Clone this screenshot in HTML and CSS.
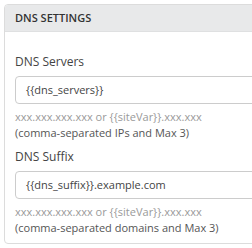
FILE: index.html
```html
<!DOCTYPE html>
<html>
<head>
<meta charset="utf-8">
<link rel="stylesheet" href="styles.css">
</head>
<body>
<div class="card">
  <div class="card-header">DNS SETTINGS</div>
  <div class="card-body">
    <div class="field">
      <label class="label">DNS Servers</label>
      <div class="input">{{dns_servers}}</div>
      <div class="hint">xxx.xxx.xxx.xxx or {{siteVar}}.xxx.xxx</div>
      <div class="note">(comma-separated IPs and Max 3)</div>
    </div>
    <div class="field">
      <label class="label">DNS Suffix</label>
      <div class="input">{{dns_suffix}}.example.com</div>
      <div class="hint">xxx.xxx.xxx.xxx or {{siteVar}}.xxx.xxx</div>
      <div class="note">(comma-separated domains and Max 3)</div>
    </div>
  </div>
</div>
</body>
</html>
```
FILE: styles.css
```css
html, body {
  margin: 0;
  padding: 0;
  background: #ffffff;
  overflow: hidden;
}
body {
  padding: 4px 0 0 4px;
  font-family: "Open Sans", "DejaVu Sans", sans-serif;
  color: #333333;
}
.card {
  width: 320px;
  border: 1px solid #dcdcdc;
  border-radius: 4px;
  overflow: hidden;
}
.card-header {
  height: 26px;
  line-height: 26px;
  background: #e8e9ea;
  border-bottom: 1px solid #dfe0e1;
  padding-left: 10px;
  font-size: 11px;
  font-weight: 600;
  color: #333;
}
.card-body {
  padding: 22px 0 7px 10px;
  display: flex;
  flex-direction: column;
  gap: 8px;
}
.field {
  display: flex;
  flex-direction: column;
}
.label {
  font-size: 12px;
  line-height: 16px;
  margin-bottom: 6px;
  color: #444;
}
.input {
  height: 26px;
  line-height: 26px;
  border: 1px solid #cccccc;
  border-radius: 4px;
  padding-left: 10px;
  font-size: 11px;
  color: #444;
}
.hint {
  margin-top: 5px;
  font-size: 11px;
  line-height: 16px;
  color: #9a9a9a;
}
.note {
  font-size: 11px;
  line-height: 16px;
  color: #555;
}
```
